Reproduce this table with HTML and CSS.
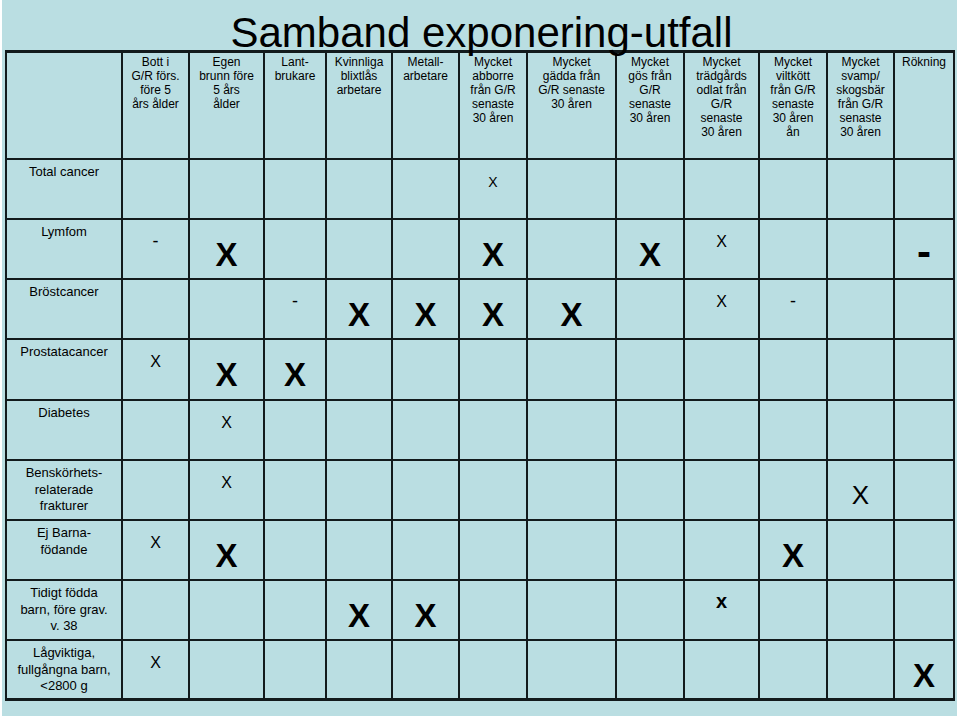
FILE: index.html
```html
<!DOCTYPE html>
<html lang="sv">
<head>
<meta charset="utf-8">
<title>Samband exponering-utfall</title>
<link rel="stylesheet" href="styles.css">
</head>
<body>
<div class="slide">
  <h1 class="title">Samband exponering-utfall</h1>
  <div class="grid">
    <!-- header -->
    <div class="cell hd"></div>
    <div class="cell hd">Bott i<br>G/R förs.<br>före 5<br>års ålder</div>
    <div class="cell hd">Egen<br>brunn före<br>5 års<br>ålder</div>
    <div class="cell hd">Lant-<br>brukare</div>
    <div class="cell hd">Kvinnliga<br>blixtlås<br>arbetare</div>
    <div class="cell hd">Metall-<br>arbetare</div>
    <div class="cell hd">Mycket<br>abborre<br>från G/R<br>senaste<br>30 åren</div>
    <div class="cell hd">Mycket<br>gädda från<br>G/R senaste<br>30 åren</div>
    <div class="cell hd">Mycket<br>gös från<br>G/R<br>senaste<br>30 åren</div>
    <div class="cell hd">Mycket<br>trädgårds<br>odlat från<br>G/R<br>senaste<br>30 åren</div>
    <div class="cell hd">Mycket<br>viltkött<br>från G/R<br>senaste<br>30 åren<br>ån</div>
    <div class="cell hd">Mycket<br>svamp/<br>skogsbär<br>från G/R<br>senaste<br>30 åren</div>
    <div class="cell hd">Rökning</div>

    <!-- Total cancer -->
    <div class="cell lbl">Total cancer</div>
    <div class="cell"></div>
    <div class="cell"></div>
    <div class="cell"></div>
    <div class="cell"></div>
    <div class="cell"></div>
    <div class="cell"><span class="mk top sm">X</span></div>
    <div class="cell"></div>
    <div class="cell"></div>
    <div class="cell"></div>
    <div class="cell"></div>
    <div class="cell"></div>
    <div class="cell"></div>

    <!-- Lymfom -->
    <div class="cell lbl">Lymfom</div>
    <div class="cell"><span class="mk top dash">-</span></div>
    <div class="cell"><span class="mk bold">X</span></div>
    <div class="cell"></div>
    <div class="cell"></div>
    <div class="cell"></div>
    <div class="cell"><span class="mk bold">X</span></div>
    <div class="cell"></div>
    <div class="cell"><span class="mk bold">X</span></div>
    <div class="cell"><span class="mk top">X</span></div>
    <div class="cell"></div>
    <div class="cell"></div>
    <div class="cell"><span class="mk bold bdash">-</span></div>

    <!-- Bröstcancer -->
    <div class="cell lbl">Bröstcancer</div>
    <div class="cell"></div>
    <div class="cell"></div>
    <div class="cell"><span class="mk top dash">-</span></div>
    <div class="cell"><span class="mk bold">X</span></div>
    <div class="cell"><span class="mk bold">X</span></div>
    <div class="cell"><span class="mk bold">X</span></div>
    <div class="cell"><span class="mk bold">X</span></div>
    <div class="cell"></div>
    <div class="cell"><span class="mk top">X</span></div>
    <div class="cell"><span class="mk top dash">-</span></div>
    <div class="cell"></div>
    <div class="cell"></div>

    <!-- Prostatacancer -->
    <div class="cell lbl">Prostatacancer</div>
    <div class="cell"><span class="mk top">X</span></div>
    <div class="cell"><span class="mk bold">X</span></div>
    <div class="cell"><span class="mk bold">X</span></div>
    <div class="cell"></div>
    <div class="cell"></div>
    <div class="cell"></div>
    <div class="cell"></div>
    <div class="cell"></div>
    <div class="cell"></div>
    <div class="cell"></div>
    <div class="cell"></div>
    <div class="cell"></div>

    <!-- Diabetes -->
    <div class="cell lbl">Diabetes</div>
    <div class="cell"></div>
    <div class="cell"><span class="mk top">X</span></div>
    <div class="cell"></div>
    <div class="cell"></div>
    <div class="cell"></div>
    <div class="cell"></div>
    <div class="cell"></div>
    <div class="cell"></div>
    <div class="cell"></div>
    <div class="cell"></div>
    <div class="cell"></div>
    <div class="cell"></div>

    <!-- Benskörhets -->
    <div class="cell lbl">Benskörhets-<br>relaterade<br>frakturer</div>
    <div class="cell"></div>
    <div class="cell"><span class="mk top">X</span></div>
    <div class="cell"></div>
    <div class="cell"></div>
    <div class="cell"></div>
    <div class="cell"></div>
    <div class="cell"></div>
    <div class="cell"></div>
    <div class="cell"></div>
    <div class="cell"></div>
    <div class="cell"><span class="mk big">X</span></div>
    <div class="cell"></div>

    <!-- Ej Barnafödande -->
    <div class="cell lbl">Ej Barna-<br>födande</div>
    <div class="cell"><span class="mk top">X</span></div>
    <div class="cell"><span class="mk bold">X</span></div>
    <div class="cell"></div>
    <div class="cell"></div>
    <div class="cell"></div>
    <div class="cell"></div>
    <div class="cell"></div>
    <div class="cell"></div>
    <div class="cell"></div>
    <div class="cell"><span class="mk bold">X</span></div>
    <div class="cell"></div>
    <div class="cell"></div>

    <!-- Tidigt födda -->
    <div class="cell lbl">Tidigt födda<br>barn, före grav.<br>v. 38</div>
    <div class="cell"></div>
    <div class="cell"></div>
    <div class="cell"></div>
    <div class="cell"><span class="mk bold">X</span></div>
    <div class="cell"><span class="mk bold">X</span></div>
    <div class="cell"></div>
    <div class="cell"></div>
    <div class="cell"></div>
    <div class="cell"><span class="mk top bx">x</span></div>
    <div class="cell"></div>
    <div class="cell"></div>
    <div class="cell"></div>

    <!-- Lågviktiga -->
    <div class="cell lbl">Lågviktiga,<br>fullgångna barn,<br>&lt;2800 g</div>
    <div class="cell"><span class="mk top">X</span></div>
    <div class="cell"></div>
    <div class="cell"></div>
    <div class="cell"></div>
    <div class="cell"></div>
    <div class="cell"></div>
    <div class="cell"></div>
    <div class="cell"></div>
    <div class="cell"></div>
    <div class="cell"></div>
    <div class="cell"></div>
    <div class="cell"><span class="mk bold">X</span></div>
  </div>
</div>
</body>
</html>
```

FILE: styles.css
```css
html, body {
  margin: 0;
  padding: 0;
  background: #ffffff;
}

body {
  font-family: "Liberation Sans", Arial, sans-serif;
  color: #000;
}

.slide {
  margin-left: 2px;
  width: 955px;
  height: 716px;
  background: #badee2;
  overflow: hidden;
}

.title {
  position: relative;
  z-index: 1;
  margin: 0;
  box-sizing: border-box;
  height: 50px;
  padding-top: 12px;
  padding-left: 4px;
  font-size: 42px;
  line-height: 42px;
  font-weight: normal;
  text-align: center;
  white-space: nowrap;
}

.grid {
  margin-left: 3px;
  width: 950px;
  box-sizing: border-box;
  display: grid;
  grid-template-columns: 114px 65px 73px 60px 64px 65px 66px 87px 66px 73px 66px 65px 58px;
  grid-template-rows: 105px 58px 58px 58px 59px 58px 58px 58px 58px 57px;
  gap: 2px;
  padding: 3px 2px;
  background: #121a1c;
}

.cell {
  background: #badee2;
  display: flex;
  flex-direction: column;
  align-items: center;
  text-align: center;
  white-space: nowrap;
}

.hd {
  font-size: 12px;
  line-height: 14px;
  padding-top: 2px;
}

.lbl {
  font-size: 13px;
  line-height: 16.5px;
  padding-top: 4px;
}

.mk {
  display: block;
}

.top {
  margin-top: 12px;
  font-size: 16px;
  line-height: 20px;
}

.top.sm {
  font-size: 14px;
}

.top.dash {
  font-size: 18px;
  margin-top: 11px;
}

.top.bx {
  font-size: 20px;
  font-weight: bold;
  margin-top: 10px;
}

.bold {
  margin-top: 17px;
  font-size: 33px;
  line-height: 36px;
  font-weight: bold;
}

.bold.bdash {
  font-size: 42px;
  line-height: 36px;
  margin-top: 14px;
}

.big {
  margin-top: 21px;
  font-size: 26px;
  line-height: 26px;
}
```
